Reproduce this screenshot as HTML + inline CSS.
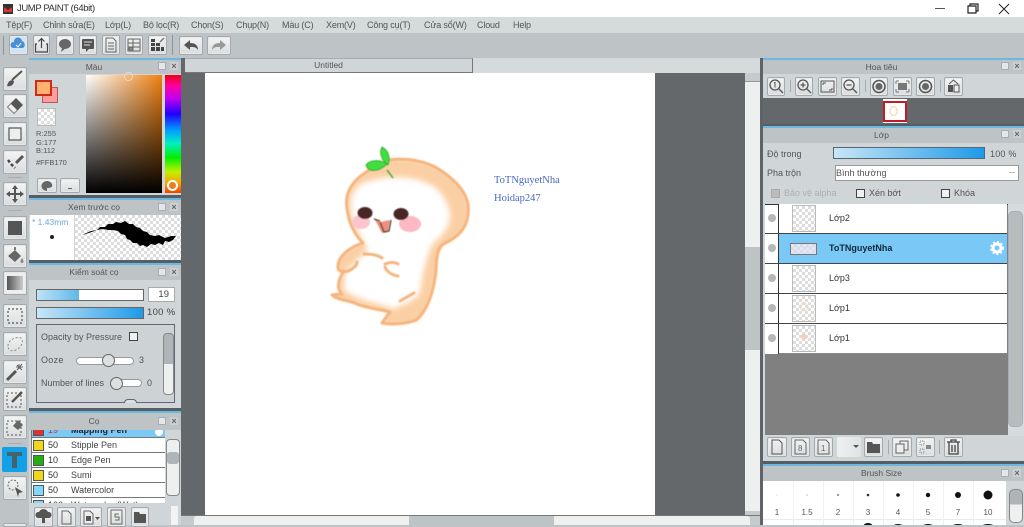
<!DOCTYPE html>
<html><head><meta charset="utf-8"><style>
*{box-sizing:border-box}
html,body{margin:0;padding:0}
body{width:1024px;height:525px;overflow:hidden;position:relative;background:#bec3c6;font-family:"Liberation Sans","Noto Sans CJK SC",sans-serif;color:#555;font-size:9px;filter:blur(.3px)}
div,span,svg{position:absolute}
.t{white-space:nowrap;line-height:12px}
.m{letter-spacing:-.15px}
.b{background:linear-gradient(#f3f4f4,#d9dcdd);border:1px solid #a3a9ac;border-radius:2px;box-shadow:0 0 0 1px #e6e8e9 inset}
.h{background:#bec3c6;text-align:center;line-height:15px;color:#555;font-size:8.5px}
.bl{background:#6cb9e0;height:2px}
.sep{background:#555e64}
.ic1{width:8px;height:8px;border:1px solid #aab;background:#e4e7e8}
.ic2{width:8px;height:8px;background:#ccd0d2;color:#666;font-size:9px;line-height:8px;text-align:center;font-weight:bold}
.ch{background-color:#fff;background-image:linear-gradient(45deg,#ddd 25%,transparent 25%,transparent 75%,#ddd 75%),linear-gradient(45deg,#ddd 25%,transparent 25%,transparent 75%,#ddd 75%);background-size:6px 6px;background-position:0 0,3px 3px}
.cb{width:9px;height:9px;border:1px solid #444;background:#eef0f1}
.row{left:779px;width:228px;height:30px;background:#fff;border-bottom:1px solid #444}
.eye{left:768px;width:8px;height:8px;border-radius:50%;background:#b5b8ba}
.th{left:792px;width:24px;height:27px;border:1px solid #bbb}
.n{left:829px;font-size:9px;color:#333}
.li{left:0;width:133px;height:15px;background:#fff;border-bottom:1px solid #777}
.sw{left:1px;top:2px;width:11px;height:11px;border:1px solid #555}
.num{left:16px;top:2px;color:#333}
.nm{left:39px;top:2px;color:#444}
.bd{font-size:8px;color:#555;text-align:center;width:20px}
</style></head><body>

<!-- title bar -->
<div style="left:0;top:0;width:1024px;height:17px;background:#fff"></div>
<svg style="left:3px;top:4px" width="10" height="10"><rect width="10" height="10" fill="#333"/><path d="M1 3L5 6L9 3V8H1Z" fill="#d33"/></svg>
<div class="t" style="left:17px;top:3px;font-size:9.5px;color:#333;letter-spacing:-.4px">JUMP PAINT (64bit)</div>
<svg style="left:930px;top:2px" width="90" height="13" fill="none" stroke="#222"><path d="M5 6.5H15" stroke="#555"/><path d="M38 4H46V11H38ZM40 4V2H48V9H46" stroke-width="1.2"/><path d="M69 2L79 12M79 2L69 12" stroke-width="1"/></svg>

<!-- menu -->
<div style="left:0;top:17px;width:1024px;height:16px;background:#d5dadb"></div>
<div class="t m" style="left:6px;top:19px">Tệp(F)</div>
<div class="t m" style="left:43px;top:19px">Chỉnh sửa(E)</div>
<div class="t m" style="left:105px;top:19px">Lớp(L)</div>
<div class="t m" style="left:143px;top:19px">Bộ lọc(R)</div>
<div class="t m" style="left:191px;top:19px">Chọn(S)</div>
<div class="t m" style="left:236px;top:19px">Chụp(N)</div>
<div class="t m" style="left:282px;top:19px">Màu (C)</div>
<div class="t m" style="left:326px;top:19px">Xem(V)</div>
<div class="t m" style="left:367px;top:19px">Công cụ(T)</div>
<div class="t m" style="left:424px;top:19px">Cửa sổ(W)</div>
<div class="t m" style="left:477px;top:19px">Cloud</div>
<div class="t m" style="left:513px;top:19px">Help</div>

<!-- top toolbar -->
<div style="left:0;top:33px;width:1024px;height:25px;background:#bec3c6"></div>
<div style="left:3px;top:36px;width:1px;height:19px;background:#8f9699"></div>
<div class="b" style="left:9px;top:35px;width:19px;height:20px;background:#cfe4f5"><svg width="17" height="18" style="left:0;top:0"><path d="M3 12a3 3 0 0 1 1-6a4 4 0 0 1 8-1a4 4 0 0 1 1 7Z" fill="#4a90d6"/><path d="M6 9l2 2l3-4" stroke="#fff" fill="none"/></svg></div>
<div class="b" style="left:33px;top:35px;width:17px;height:20px"><svg width="15" height="18" style="left:0;top:0" fill="none" stroke="#444" stroke-width="1.2"><path d="M3 8H1.5V16H13.500V8H12M7.500 12V3M4.500 5.500L7.500 2.500L10.500 5.500"/></svg></div>
<div class="b" style="left:56px;top:35px;width:18px;height:20px"><svg width="16" height="18" style="left:0;top:0"><ellipse cx="8" cy="8" rx="6" ry="5" fill="#666"/><path d="M5 12L4 16L9 12Z" fill="#666"/></svg></div>
<div class="b" style="left:79px;top:35px;width:18px;height:20px"><svg width="16" height="18" style="left:0;top:0"><rect x="2" y="3" width="12" height="10" rx="1" fill="#555"/><path d="M4 6H12M4 9H10" stroke="#ddd"/><path d="M6 13V16L9 13Z" fill="#555"/></svg></div>
<div class="b" style="left:102px;top:35px;width:18px;height:20px"><svg width="16" height="18" style="left:0;top:0" fill="none" stroke="#666"><path d="M3 2H10L13 5V16H3ZM5 7H11M5 10H11M5 13H11"/></svg></div>
<div class="b" style="left:125px;top:35px;width:18px;height:20px"><svg width="16" height="18" style="left:0;top:0" fill="none" stroke="#666"><path d="M2 3H14V15H2ZM2 7H14M2 11H14M7 3V15"/><circle cx="5" cy="13" r="2" fill="#888"/></svg></div>
<div class="b" style="left:148px;top:35px;width:19px;height:20px"><svg width="17" height="18" style="left:0;top:0"><path d="M2 7H6V10H2ZM7 7H11V10H7ZM2 11H6V15H2ZM7 11H11V15H7ZM12 11H15V15H12ZM2 3H6V6H2Z" fill="#444"/><path d="M11 6L15 2" stroke="#777" stroke-width="1.500"/></svg></div>
<div style="left:172px;top:35px;width:1px;height:20px;background:#8f9699"></div>
<div class="b" style="left:179px;top:36px;width:24px;height:19px"><svg width="22" height="17" style="left:0;top:0"><path d="M4 8L10 3V6C15 6 18 8 18 13C16 10 14 10 10 10V13Z" fill="#555"/></svg></div>
<div class="b" style="left:207px;top:36px;width:24px;height:19px"><svg width="22" height="17" style="left:0;top:0"><path d="M18 8L12 3V6C7 6 4 8 4 13C6 10 8 10 12 10V13Z" fill="#999"/></svg></div>

<!-- canvas area -->
<div style="left:181px;top:58px;width:580px;height:467px;background:#65686b"></div>
<div style="left:185px;top:58px;width:575px;height:15px;background:#d5dadb"></div>
<div style="left:185px;top:58px;width:288px;height:15px;background:#d0d5d7;border-right:1px solid #777;border-bottom:1px solid #777;border-top:1px solid #aab;text-align:center;line-height:13px;font-size:8.5px">Untitled</div>
<div style="left:205px;top:73px;width:450px;height:442px;background:#fff"></div>
<div style="left:745px;top:73px;width:15px;height:438px;background:#eef0f0"></div>
<div style="left:745px;top:73px;width:15px;height:9px;background:#c6cacc;border-bottom:1px solid #999"></div>
<div style="left:745px;top:247px;width:15px;height:103px;background:#bec3c6"></div>
<div style="left:745px;top:511px;width:15px;height:14px;background:#c6cacc"></div>
<div style="left:181px;top:515px;width:580px;height:10px;background:#c6cacc;border-top:1px solid #777"></div>
<div style="left:194px;top:516px;width:556px;height:9px;background:#eef0f0;border-radius:3px 3px 0 0"></div>
<div style="left:409px;top:516px;width:145px;height:9px;background:#bec3c6"></div>

<!-- character -->
<svg style="left:320px;top:140px" width="170" height="195" viewBox="320 140 170 195">
<defs>
<filter id="f1" x="-20%" y="-20%" width="140%" height="140%"><feGaussianBlur stdDeviation="3"/></filter>
<filter id="f2" x="-20%" y="-20%" width="140%" height="140%"><feGaussianBlur stdDeviation="1.500"/></filter>
<filter id="f3"><feGaussianBlur stdDeviation=".4"/></filter>
</defs>
<path d="M365 173C350 183 345 195 347 208C349 225 356 236 363 243C350 248 338 256 338 267C338 272 340 274 344 273C338 282 337 290 342 294L332 296C340 301 350 301 357 304C370 309 380 311 390 312L382 323C395 325 410 324 418 320C428 310 433 290 436 273C437 260 437 250 445 244C460 236 470 225 468 205C466 190 452 178 440 170C425 160 400 158 385 160C375 162 370 168 365 173Z" fill="#fbcfa4" filter="url(#f2)"/>
<path d="M363 183C352 190 350 200 351 208C353 225 362 238 368 250L345 272L344 290C360 302 385 304 393 309C408 303 418 298 420 292C422 280 424 262 433 243C444 235 450 225 450 215C449 205 445 198 438 190C425 178 395 172 363 183Z" fill="#fff" filter="url(#f1)"/>
<g fill="none" stroke="#f6b57e" stroke-width="3" stroke-linecap="round" stroke-linejoin="round" filter="url(#f3)">
<path d="M390 160C405 158 425 160 440 170C452 178 466 190 468 205C470 225 460 236 445 243C438 246 436 255 436 270C434 290 428 310 416 320"/>
<path d="M365 173C350 183 345 195 347 208C349 225 356 236 363 243C350 247 338 256 338 267C338 272 345 273 350 270C354 268 357 265 357 262"/>
<path d="M344 271C338 280 336 288 342 294L332 295C340 301 350 300 357 304C370 309 380 309 390 312L382 323C395 325 408 323 416 320"/>
<path d="M365 173L378 164"/>
<path d="M364 254C370 254 378 255 382 258M385 264C390 262 395 262 398 264M385 267C387 272 392 275 398 276M400 301L414 293"/>
</g>
<g filter="url(#f3)">
<ellipse cx="361" cy="222" rx="9" ry="7" fill="#fbc4cf"/><ellipse cx="410" cy="224" rx="11" ry="8" fill="#fbb9c2"/>
<ellipse cx="365" cy="213" rx="7.500" ry="6" fill="#4a2525"/><ellipse cx="401" cy="214" rx="7.500" ry="6" fill="#4a2525"/>
<path d="M374 218L380 222L390 220L388 232L382 233Z" fill="#f08f80"/>
<path d="M374 219L380 221M380 222L384 232L389 231L391 220" fill="none" stroke="#442" stroke-width="1.300"/>
<path d="M387 170L393 178" stroke="#28a828" stroke-width="1.300"/>
<path d="M388 165C381 160 379 152 382 147C388 150 391 157 388 165Z" fill="#3fde3f" stroke="#28a828" stroke-width=".8"/>
<path d="M387 164C379 159 369 160 366 165C368 172 378 173 387 164Z" fill="#3fde3f" stroke="#28a828" stroke-width=".8"/>
</g>
</svg>
<div class="t" style="left:494px;top:175px;font-family:'Liberation Serif',serif;font-size:10.500px;color:#4a67c0">ToTNguyetNha</div>
<div class="t" style="left:494px;top:193px;font-family:'Liberation Serif',serif;font-size:10.500px;color:#4a67c0">Hoidap247</div>

<!-- left tools -->
<div style="left:0;top:58px;width:29px;height:467px;background:#bec3c6"></div>
<div class="b" style="left:3px;top:67px;width:24px;height:24px"><svg width="22" height="22" style="left:0;top:0"><path d="M18 3L8 12" stroke="#555" stroke-width="2"/><path d="M3 18C4 13 7 11 10 13C10 17 6 19 3 18Z" fill="#555"/></svg></div>
<div class="b" style="left:3px;top:94px;width:24px;height:24px"><svg width="22" height="22" style="left:0;top:0"><path d="M12 3L19 10L10 19L3 12Z" fill="#555"/><path d="M7 9L13 15L10 18L4 12Z" fill="#eee"/></svg></div>
<div class="b" style="left:3px;top:122px;width:24px;height:24px"><svg width="22" height="22" style="left:0;top:0"><rect x="5" y="5" width="12" height="12" fill="#eee" stroke="#555" stroke-width="1.200"/></svg></div>
<div class="b" style="left:3px;top:150px;width:24px;height:24px"><svg width="22" height="22" style="left:0;top:0"><path d="M4 9L7 13L11 17" stroke="#444" stroke-width="2.500" stroke-dasharray="3 2" fill="none"/><path d="M12 12L19 5" stroke="#555" stroke-width="3"/></svg></div>
<div style="left:8px;top:177px;width:14px;height:1px;background:#a7adb0"></div>
<div class="b" style="left:3px;top:182px;width:24px;height:24px"><svg width="22" height="22" style="left:0;top:0"><path d="M11 2L14 6H12V10H16V8L20 11L16 14V12H12V16H14L11 20L8 16H10V12H6V14L2 11L6 8V10H10V6H8Z" fill="#555"/></svg></div>
<div style="left:8px;top:210px;width:14px;height:1px;background:#a7adb0"></div>
<div class="b" style="left:3px;top:216px;width:24px;height:24px"><svg width="22" height="22" style="left:0;top:0"><rect x="4" y="4" width="14" height="14" fill="#555"/></svg></div>
<div class="b" style="left:3px;top:244px;width:24px;height:24px"><svg width="22" height="22" style="left:0;top:0"><path d="M4 11L11 5L17 11L11 17Z" fill="#666"/><path d="M11 5V2" stroke="#555" stroke-width="1.500"/><path d="M18 13C20 16 20 18 18 18C16 18 16 16 18 13Z" fill="#888"/></svg></div>
<div class="b" style="left:3px;top:271px;width:24px;height:24px;background:#eee"><div style="left:3px;top:4px;width:16px;height:14px;background:linear-gradient(90deg,#555,#ccc)"></div></div>
<div style="left:8px;top:299px;width:14px;height:1px;background:#a7adb0"></div>
<div class="b" style="left:3px;top:304px;width:24px;height:24px"><svg width="22" height="22" style="left:0;top:0"><rect x="4" y="4" width="14" height="14" fill="none" stroke="#555" stroke-dasharray="2 2" stroke-width="1.200"/></svg></div>
<div class="b" style="left:3px;top:332px;width:24px;height:24px"><svg width="22" height="22" style="left:0;top:0"><path d="M4 13C4 7 12 3 17 5C20 8 18 14 12 17C7 19 4 17 4 13Z" fill="none" stroke="#888" stroke-dasharray="2 2"/></svg></div>
<div class="b" style="left:3px;top:360px;width:24px;height:24px"><svg width="22" height="22" style="left:0;top:0"><path d="M3 19L12 10" stroke="#555" stroke-width="3"/><path d="M15 3V8M12 6H19M13 4L18 9M18 3L13 9" stroke="#666"/></svg></div>
<div class="b" style="left:3px;top:387px;width:24px;height:24px"><svg width="22" height="22" style="left:0;top:0"><rect x="3" y="5" width="14" height="14" fill="none" stroke="#555" stroke-dasharray="2 2"/><path d="M8 14L18 4" stroke="#555" stroke-width="2.500"/></svg></div>
<div class="b" style="left:3px;top:415px;width:24px;height:24px"><svg width="22" height="22" style="left:0;top:0"><rect x="3" y="5" width="14" height="14" fill="none" stroke="#555" stroke-dasharray="2 2"/><path d="M9 10L14 4L19 9L14 14Z" fill="#666"/></svg></div>
<div style="left:8px;top:443px;width:14px;height:1px;background:#a7adb0"></div>
<div style="left:2px;top:447px;width:25px;height:25px;background:#12a0e8;border-radius:2px"><svg width="25" height="25" style="left:0;top:0"><path d="M5 5H20V9H15V21H10V9H5Z" fill="#45626f"/></svg></div>
<div class="b" style="left:3px;top:476px;width:24px;height:24px"><svg width="22" height="22" style="left:0;top:0"><circle cx="9" cy="8" r="5" fill="none" stroke="#666" stroke-dasharray="2 1.500"/><path d="M11 10L19 15L15 16L14 20Z" fill="#555"/></svg></div>
<div class="b" style="left:3px;top:523px;width:24px;height:4px"></div>

<!-- Màu panel -->
<div style="left:29px;top:58px;width:152px;height:467px;background:#d0d5d7"></div>
<div class="bl" style="left:29px;top:58px;width:152px"></div>
<div class="h" style="left:29px;top:60px;width:152px;height:14px;line-height:14px;padding-right:22px">Màu</div>
<div class="ic1" style="left:158px;top:62px"></div><div class="ic2" style="left:170px;top:62px">×</div>
<div style="left:42px;top:87px;width:16px;height:16px;background:#ff9d9d;border:1px solid #b45a5a"></div>
<div style="left:35px;top:80px;width:17px;height:16px;background:#ffb170;border:2px solid #cf2a1c"></div>
<div class="ch" style="left:37px;top:108px;width:19px;height:18px;border:1px solid #bbb"></div>
<div class="t" style="left:36px;top:130px;font-size:7.500px;line-height:8.500px;color:#555">R:255<br>G:177<br>B:112</div>
<div class="t" style="left:36px;top:158px;font-size:7.500px;line-height:9px;color:#555">#FFB170</div>
<div class="b" style="left:37px;top:178px;width:20px;height:15px"><svg width="18" height="13" style="left:0;top:0"><path d="M9 2A5.500 5 0 1 0 9 12L9 9C13 9 15 8 14 5C13 3 11 2 9 2Z" fill="#666"/></svg></div>
<div class="b" style="left:60px;top:178px;width:20px;height:15px"><div style="left:7px;top:9px;width:4px;height:1px;background:#666"></div></div>
<div style="left:86px;top:75px;width:76px;height:118px;background:linear-gradient(rgba(0,0,0,0),#000),linear-gradient(90deg,#fff,#f08010)"></div>
<div style="left:124px;top:72px;width:9px;height:9px;border-radius:50%;border:1.500px solid #e8dcc8"></div>
<div style="left:165px;top:75px;width:16px;height:118px;background:linear-gradient(#f00010,#ff00a0 9%,#c000f0 20%,#2000ff 33%,#00a0ff 47%,#00f0c0 58%,#00f000 70%,#c0f000 82%,#ffa000 92%,#f04000)"></div>
<div style="left:167px;top:180px;width:11px;height:11px;border-radius:50%;border:2px solid #fff;background:#e88020"></div>
<div class="sep" style="left:29px;top:195px;width:152px;height:3px"></div>
<div class="bl" style="left:29px;top:198px;width:152px"></div>

<!-- Preview -->
<div class="h" style="left:29px;top:200px;width:152px;height:15px;padding-right:22px">Xem trước cọ</div>
<div class="ic1" style="left:158px;top:203px"></div><div class="ic2" style="left:170px;top:203px">×</div>
<div style="left:30px;top:215px;width:44px;height:45px;background:#fff"></div>
<div class="t" style="left:32px;top:216px;font-size:8.500px;color:#6ca8d8">* 1.43mm</div>
<div style="left:50px;top:235px;width:4px;height:4px;border-radius:50%;background:#222"></div>
<div class="ch" style="left:75px;top:215px;width:106px;height:45px"></div>
<svg style="left:75px;top:215px" width="106" height="45"><path d="M7 20L16 16L22 15L25 12L30 12L33 9L38 9L41 7L46 8L50 6L54 9L58 9L61 12L65 13L68 16L72 17L75 20L80 21L84 20L90 23L96 21L101 21L98 25L94 27L90 26L88 30L84 28L80 30L76 29L72 32L68 30L65 31L62 28L58 28L55 25L52 24L50 20L46 19L43 16L38 15L33 15L28 14L22 15L14 18Z" fill="#000"/></svg>
<div class="sep" style="left:29px;top:260px;width:152px;height:3px"></div>
<div class="bl" style="left:29px;top:263px;width:152px"></div>

<!-- Kiểm soát cọ -->
<div class="h" style="left:29px;top:265px;width:152px;height:15px;padding-right:22px">Kiểm soát cọ</div>
<div class="ic1" style="left:158px;top:268px"></div><div class="ic2" style="left:170px;top:268px">×</div>
<div style="left:36px;top:289px;width:108px;height:12px;background:#fff;border:1px solid #666"></div>
<div style="left:37px;top:290px;width:42px;height:10px;background:linear-gradient(90deg,#bfe2f5,#60b8ea)"></div>
<div style="left:148px;top:287px;width:27px;height:15px;background:#fff;border:1px solid #aaa;text-align:right;padding-right:5px;line-height:14px;font-size:9.500px;color:#444">19</div>
<div style="left:36px;top:307px;width:108px;height:12px;border:1px solid #666;background:linear-gradient(90deg,#c8e6f6,#1e9ae8)"></div>
<div class="t" style="left:147px;top:307px;font-size:9.500px;color:#444;letter-spacing:.3px">100 %</div>
<div style="left:36px;top:324px;width:139px;height:79px;border:1px solid #667;background:#cdd2d4;overflow:hidden"></div>
<div class="t" style="left:41px;top:331px">Opacity by Pressure</div>
<div class="cb" style="left:129px;top:332px"></div>
<div style="left:163px;top:333px;width:11px;height:62px;border:1px solid #888;border-radius:4px;background:linear-gradient(#aeb4b7 50%,#eef0f0 50%)"></div>
<div class="t" style="left:41px;top:354px;letter-spacing:.3px">Ooze</div>
<div style="left:76px;top:357px;width:58px;height:8px;background:#fff;border:1px solid #999;border-radius:4px"></div>
<div style="left:102px;top:354px;width:13px;height:13px;border-radius:50%;background:#dde0e1;border:1px solid #666"></div>
<div class="t" style="left:139px;top:354px">3</div>
<div class="t" style="left:41px;top:377px">Number of lines</div>
<div style="left:111px;top:379px;width:31px;height:8px;background:#fff;border:1px solid #999;border-radius:4px"></div>
<div style="left:110px;top:377px;width:13px;height:13px;border-radius:50%;background:#dde0e1;border:1px solid #666"></div>
<div class="t" style="left:147px;top:377px">0</div>
<div style="left:124px;top:399px;width:13px;height:4px;border-radius:7px 7px 0 0;background:#dde0e1;border:1px solid #666;border-bottom:none"></div>
<div class="sep" style="left:29px;top:408px;width:152px;height:3px"></div>
<div class="bl" style="left:29px;top:411px;width:152px"></div>

<!-- Cọ -->
<div class="h" style="left:29px;top:413px;width:152px;height:17px;line-height:17px;padding-right:22px">Cọ</div>
<div class="ic1" style="left:158px;top:417px"></div><div class="ic2" style="left:170px;top:417px">×</div>
<div style="left:31px;top:430px;width:134px;height:73px;overflow:hidden;background:#fff;border-left:1px solid #777">
<div class="li" style="top:-7px;background:#7ac9f6"><div class="sw" style="background:#e03030"></div><div class="num" style="color:#c33">19</div><div class="nm" style="font-weight:bold;color:#223">Mapping Pen</div><svg width="10" height="10" style="left:122px;top:4px"><circle cx="5" cy="5" r="4" fill="#fff"/></svg></div>
<div class="li" style="top:8px"><div class="sw" style="background:#f0d818"></div><div class="num">50</div><div class="nm">Stipple Pen</div></div>
<div class="li" style="top:23px"><div class="sw" style="background:#20b010"></div><div class="num">10</div><div class="nm">Edge Pen</div></div>
<div class="li" style="top:38px"><div class="sw" style="background:#f0d818"></div><div class="num">50</div><div class="nm">Sumi</div></div>
<div class="li" style="top:53px"><div class="sw" style="background:#80d8ff"></div><div class="num">50</div><div class="nm">Watercolor</div></div>
<div class="li" style="top:68px"><div class="sw" style="background:#80d8ff"></div><div class="num">100</div><div class="nm">Watercolor (Wet)</div></div>
</div>
<div style="left:166px;top:439px;width:14px;height:57px;border:1px solid #888;border-radius:4px;background:#eef0f0"></div>
<div style="left:167px;top:452px;width:12px;height:12px;background:#aeb4b7;border-radius:3px"></div>
<div class="b" style="left:34px;top:507px;width:19px;height:20px"><svg width="17" height="18" style="left:0;top:0"><path d="M3 10A3 3 0 0 1 4 4A5 5 0 0 1 13 4A3 3 0 0 1 14 10H10V15H7V10Z" fill="#555"/></svg></div>
<div class="b" style="left:57px;top:507px;width:19px;height:20px"><svg width="17" height="18" style="left:0;top:0" fill="none" stroke="#666"><path d="M4 3H10L13 6V16H4Z"/></svg></div>
<div class="b" style="left:80px;top:507px;width:22px;height:20px"><svg width="20" height="18" style="left:0;top:0"><path d="M3 3H9L12 6V16H3Z" fill="#eee" stroke="#666"/><rect x="5" y="8" width="5" height="5" fill="#555"/><path d="M14 9H19L16.500 12Z" fill="#555"/></svg></div>
<div class="b" style="left:107px;top:507px;width:19px;height:20px"><svg width="17" height="18" style="left:0;top:0" fill="none" stroke="#666"><path d="M3 2H14V16H3ZM11 6H7V9H11V12H7"/></svg></div>
<div class="b" style="left:131px;top:507px;width:18px;height:20px"><svg width="16" height="18" style="left:0;top:0"><path d="M2 4H7L8 6H14V15H2Z" fill="#555"/></svg></div>
<div style="left:171px;top:506px;width:7px;height:19px;background:#f2f4f4"></div>

<!-- right side -->
<div style="left:760px;top:58px;width:3px;height:467px;background:#5e6368"></div>
<div style="left:763px;top:58px;width:261px;height:467px;background:#d0d5d7"></div>
<div class="bl" style="left:763px;top:58px;width:261px"></div>
<div class="h" style="left:763px;top:60px;width:261px;height:14px;line-height:14px;padding-right:24px">Hoa tiêu</div>
<div class="ic1" style="left:1001px;top:62px"></div><div class="ic2" style="left:1013px;top:62px">×</div>
<div class="b" style="left:767px;top:77px;width:18px;height:19px"><svg width="16" height="17" style="left:0;top:0" fill="none" stroke="#555" stroke-width="1.300"><circle cx="7" cy="7" r="5"/><path d="M11 11L15 15"/><path d="M6 5L7 4.500V9.500" stroke-width="1"/></svg></div>
<div style="left:790px;top:80px;width:1px;height:12px;background:#aaa"></div>
<div class="b" style="left:795px;top:77px;width:18px;height:19px"><svg width="16" height="17" style="left:0;top:0" fill="none" stroke="#555" stroke-width="1.300"><circle cx="7" cy="7" r="5"/><path d="M11 11L15 15M4.500 7H9.500M7 4.500V9.500"/></svg></div>
<div class="b" style="left:818px;top:77px;width:19px;height:19px"><svg width="17" height="17" style="left:0;top:0" fill="none" stroke="#555"><rect x="2" y="3" width="13" height="11"/><path d="M4 5H7M4 5V7M13 12H10M13 12V10"/></svg></div>
<div class="b" style="left:841px;top:77px;width:19px;height:19px"><svg width="17" height="17" style="left:0;top:0" fill="none" stroke="#555" stroke-width="1.300"><circle cx="7" cy="7" r="5"/><path d="M11 11L15 15M4.500 7H9.500"/></svg></div>
<div style="left:865px;top:80px;width:1px;height:12px;background:#aaa"></div>
<div class="b" style="left:870px;top:77px;width:18px;height:19px"><svg width="16" height="17" style="left:0;top:0"><circle cx="8" cy="8.500" r="6" fill="none" stroke="#555" stroke-width="1.500"/><circle cx="8" cy="8.500" r="3.500" fill="#666"/></svg></div>
<div class="b" style="left:893px;top:77px;width:19px;height:19px"><svg width="17" height="17" style="left:0;top:0"><rect x="4" y="5" width="9" height="7" fill="#777"/><path d="M2 3H5M2 3V6M15 3H12M15 3V6M2 14H5M2 14V11M15 14H12M15 14V11" stroke="#777" fill="none"/></svg></div>
<div class="b" style="left:916px;top:77px;width:19px;height:19px"><svg width="17" height="17" style="left:0;top:0"><circle cx="8.500" cy="8.500" r="6" fill="none" stroke="#555" stroke-width="1.500"/><circle cx="8.500" cy="8.500" r="3.500" fill="#666"/></svg></div>
<div style="left:940px;top:80px;width:1px;height:12px;background:#aaa"></div>
<div class="b" style="left:944px;top:77px;width:19px;height:19px"><svg width="17" height="17" style="left:0;top:0"><rect x="3" y="7" width="5" height="7" fill="#555"/><rect x="9" y="7" width="5" height="7" fill="#eee" stroke="#555"/><path d="M4 6L8.500 2L13 6" fill="none" stroke="#555"/></svg></div>
<div style="left:763px;top:98px;width:261px;height:26px;background:#65686b"></div>
<div style="left:883px;top:99px;width:24px;height:24px;background:#fff"></div>
<div style="left:883px;top:101px;width:24px;height:21px;background:#fff;border:2px solid #c01c28"></div>
<svg style="left:889px;top:105px" width="9" height="12"><ellipse cx="4.500" cy="6" rx="3.500" ry="4.500" fill="#fff" stroke="#f6cfa8"/></svg>
<div class="sep" style="left:763px;top:124px;width:261px;height:2px"></div>
<div class="bl" style="left:763px;top:126px;width:261px"></div>

<!-- Lớp -->
<div class="h" style="left:763px;top:128px;width:261px;height:15px;padding-right:24px">Lớp</div>
<div class="ic1" style="left:1001px;top:130px"></div><div class="ic2" style="left:1013px;top:130px">×</div>
<div class="t" style="left:767px;top:148px">Độ trong</div>
<div style="left:833px;top:147px;width:152px;height:12px;border:1px solid #567;background:linear-gradient(90deg,#c8e6f6,#1e9ae8)"></div>
<div class="t" style="left:990px;top:148px;letter-spacing:.2px">100 %</div>
<div class="t" style="left:767px;top:167px">Pha trộn</div>
<div style="left:835px;top:165px;width:184px;height:16px;background:#fff;border:1px solid #999"></div>
<div class="t" style="left:836px;top:167px;color:#555">Bình thường</div>
<div style="left:1009px;top:172px;width:6px;height:1px;background:#bbb"></div>
<div class="cb" style="left:771px;top:189px;border-color:#aaa;background:#bbb"></div>
<div class="t" style="left:784px;top:187px;color:#aab0b3">Bảo vệ alpha</div>
<div class="cb" style="left:856px;top:189px"></div><div class="t" style="left:869px;top:187px">Xén bớt</div>
<div class="cb" style="left:941px;top:189px"></div><div class="t" style="left:954px;top:187px">Khóa</div>

<div style="left:765px;top:204px;width:243px;height:231px;background:#808080"></div>
<div style="left:765px;top:204px;width:243px;height:1px;background:#333"></div>
<div style="left:765px;top:205px;width:14px;height:149px;background:#fff;border-right:1px solid #333"></div>
<div style="left:765px;top:233px;width:14px;height:1px;background:#444"></div>
<div style="left:765px;top:263px;width:14px;height:1px;background:#444"></div>
<div style="left:765px;top:293px;width:14px;height:1px;background:#444"></div>
<div style="left:765px;top:323px;width:14px;height:1px;background:#444"></div>
<div class="row" style="top:204px"></div>
<div class="row" style="top:234px;background:#79c8f5"></div>
<div class="row" style="top:264px"></div>
<div class="row" style="top:294px"></div>
<div class="row" style="top:324px;border-bottom:1px solid #888"></div>
<div class="eye" style="top:214px"></div><div class="eye" style="top:244px"></div><div class="eye" style="top:274px"></div><div class="eye" style="top:304px"></div><div class="eye" style="top:334px"></div>
<div class="th ch" style="top:205px"></div>
<div class="ch" style="left:790px;top:243px;width:27px;height:12px;border:1px solid #777;background-color:#dfe6ff"></div>
<div class="th ch" style="top:265px"></div>
<div class="th ch" style="top:295px"><svg width="22" height="25" style="left:0;top:0"><circle cx="11" cy="11" r="4" fill="none" stroke="#f6d8bb"/></svg></div>
<div class="th ch" style="top:325px"><svg width="22" height="25" style="left:0;top:0"><circle cx="11" cy="11" r="3" fill="#f9cdbb"/></svg></div>
<div class="t n" style="top:212px">Lớp2</div>
<div class="t n" style="top:242px;font-weight:bold;color:#12283a">ToTNguyetNha</div>
<div class="t n" style="top:272px">Lớp3</div>
<div class="t n" style="top:302px">Lớp1</div>
<div class="t n" style="top:332px">Lớp1</div>
<svg style="left:990px;top:241px" width="14" height="14"><circle cx="7" cy="7" r="4" fill="none" stroke="#fff" stroke-width="3"/><circle cx="7" cy="7" r="6" fill="none" stroke="#fff" stroke-width="2" stroke-dasharray="2 2"/></svg>
<div style="left:1008px;top:204px;width:16px;height:232px;background:#d8dbdd"></div>
<div style="left:1008px;top:211px;width:15px;height:216px;border-radius:5px;background:#b7bcbf;border:1px solid #aab"></div>

<div class="b" style="left:767px;top:437px;width:20px;height:20px"><svg width="18" height="18" style="left:0;top:0" fill="none" stroke="#555"><path d="M4 2H11L14 5V16H4Z"/></svg></div>
<div class="b" style="left:791px;top:437px;width:19px;height:20px"><svg width="17" height="18" style="left:0;top:0" fill="none" stroke="#666"><path d="M3 2H11L14 5V16H3Z"/><text x="6" y="13" font-size="8" fill="#666" stroke="none" font-family="Liberation Sans">8</text></svg></div>
<div class="b" style="left:814px;top:437px;width:19px;height:20px"><svg width="17" height="18" style="left:0;top:0" fill="none" stroke="#666"><path d="M3 2H11L14 5V16H3Z"/><text x="6" y="13" font-size="8" fill="#666" stroke="none" font-family="Liberation Sans">1</text></svg></div>
<div style="left:837px;top:437px;width:24px;height:20px;background:linear-gradient(90deg,#eef0f1,#e0e3e4);border-radius:2px"><svg width="24" height="20" style="left:0;top:0"><path d="M16 8H22L19 11Z" fill="#555"/></svg></div>
<div class="b" style="left:864px;top:437px;width:19px;height:20px"><svg width="17" height="18" style="left:0;top:0"><path d="M2 4H7L8 6H15V15H2Z" fill="#555"/></svg></div>
<div style="left:888px;top:440px;width:1px;height:14px;background:#aaa"></div>
<div class="b" style="left:892px;top:437px;width:20px;height:20px"><svg width="18" height="18" style="left:0;top:0" fill="#eee" stroke="#666"><rect x="7" y="3" width="8" height="9"/><rect x="3" y="6" width="8" height="9"/></svg></div>
<div class="b" style="left:916px;top:437px;width:19px;height:20px"><svg width="17" height="18" style="left:0;top:0"><rect x="3" y="3" width="4" height="4" fill="none" stroke="#888" stroke-dasharray="1 1"/><rect x="3" y="11" width="4" height="4" fill="none" stroke="#888" stroke-dasharray="1 1"/><rect x="9" y="7" width="5" height="4" fill="#888"/></svg></div>
<div style="left:939px;top:440px;width:1px;height:14px;background:#aaa"></div>
<div class="b" style="left:944px;top:437px;width:19px;height:20px"><svg width="17" height="18" style="left:0;top:0" fill="none" stroke="#444" stroke-width="1.300"><path d="M2 4H15M6 4V2H11V4M4 4V16H13V4M7 7V14M10 7V14"/></svg></div>
<div class="sep" style="left:763px;top:461px;width:261px;height:3px"></div>
<div class="bl" style="left:763px;top:464px;width:261px"></div>

<!-- Brush size -->
<div class="h" style="left:763px;top:466px;width:261px;height:15px;padding-right:24px">Brush Size</div>
<div class="ic1" style="left:1001px;top:469px"></div><div class="ic2" style="left:1013px;top:469px">×</div>
<div style="left:763px;top:481px;width:243px;height:44px;background:#fff"></div>
<div style="left:763px;top:519px;width:243px;height:1px;background:#e8eaeb"></div>
<div style="left:793px;top:481px;width:1px;height:44px;background:#f0f1f2"></div><div style="left:823px;top:481px;width:1px;height:44px;background:#f0f1f2"></div><div style="left:853px;top:481px;width:1px;height:44px;background:#f0f1f2"></div><div style="left:883px;top:481px;width:1px;height:44px;background:#f0f1f2"></div><div style="left:913px;top:481px;width:1px;height:44px;background:#f0f1f2"></div><div style="left:943px;top:481px;width:1px;height:44px;background:#f0f1f2"></div><div style="left:973px;top:481px;width:1px;height:44px;background:#f0f1f2"></div>
<svg style="left:763px;top:481px" width="243" height="44" fill="#111">
<circle cx="14" cy="14" r=".6" fill="#ccc"/><circle cx="44" cy="14" r=".8" fill="#bbb"/><circle cx="75" cy="14" r="1" fill="#777"/><circle cx="105" cy="14" r="1.300" fill="#333"/><circle cx="135" cy="14" r="1.800"/><circle cx="165" cy="14" r="2.200"/><circle cx="195" cy="14" r="3"/><circle cx="225" cy="14" r="4.500"/>
<ellipse cx="105" cy="46" rx="5" ry="4"/><ellipse cx="135" cy="47" rx="6.500" ry="4"/><ellipse cx="165" cy="47" rx="7" ry="4"/><ellipse cx="195" cy="47" rx="7.500" ry="4"/><ellipse cx="225" cy="47" rx="8" ry="4"/>
</svg>
<div class="t bd" style="left:767px;top:507px">1</div>
<div class="t bd" style="left:797px;top:507px">1.5</div>
<div class="t bd" style="left:828px;top:507px">2</div>
<div class="t bd" style="left:858px;top:507px">3</div>
<div class="t bd" style="left:888px;top:507px">4</div>
<div class="t bd" style="left:918px;top:507px">5</div>
<div class="t bd" style="left:948px;top:507px">7</div>
<div class="t bd" style="left:978px;top:507px">10</div>
<div style="left:1009px;top:489px;width:14px;height:34px;border-radius:5px;border:1px solid #888;background:linear-gradient(#aeb4b7 45%,#eef0f0 45%)"></div>
</body></html>
